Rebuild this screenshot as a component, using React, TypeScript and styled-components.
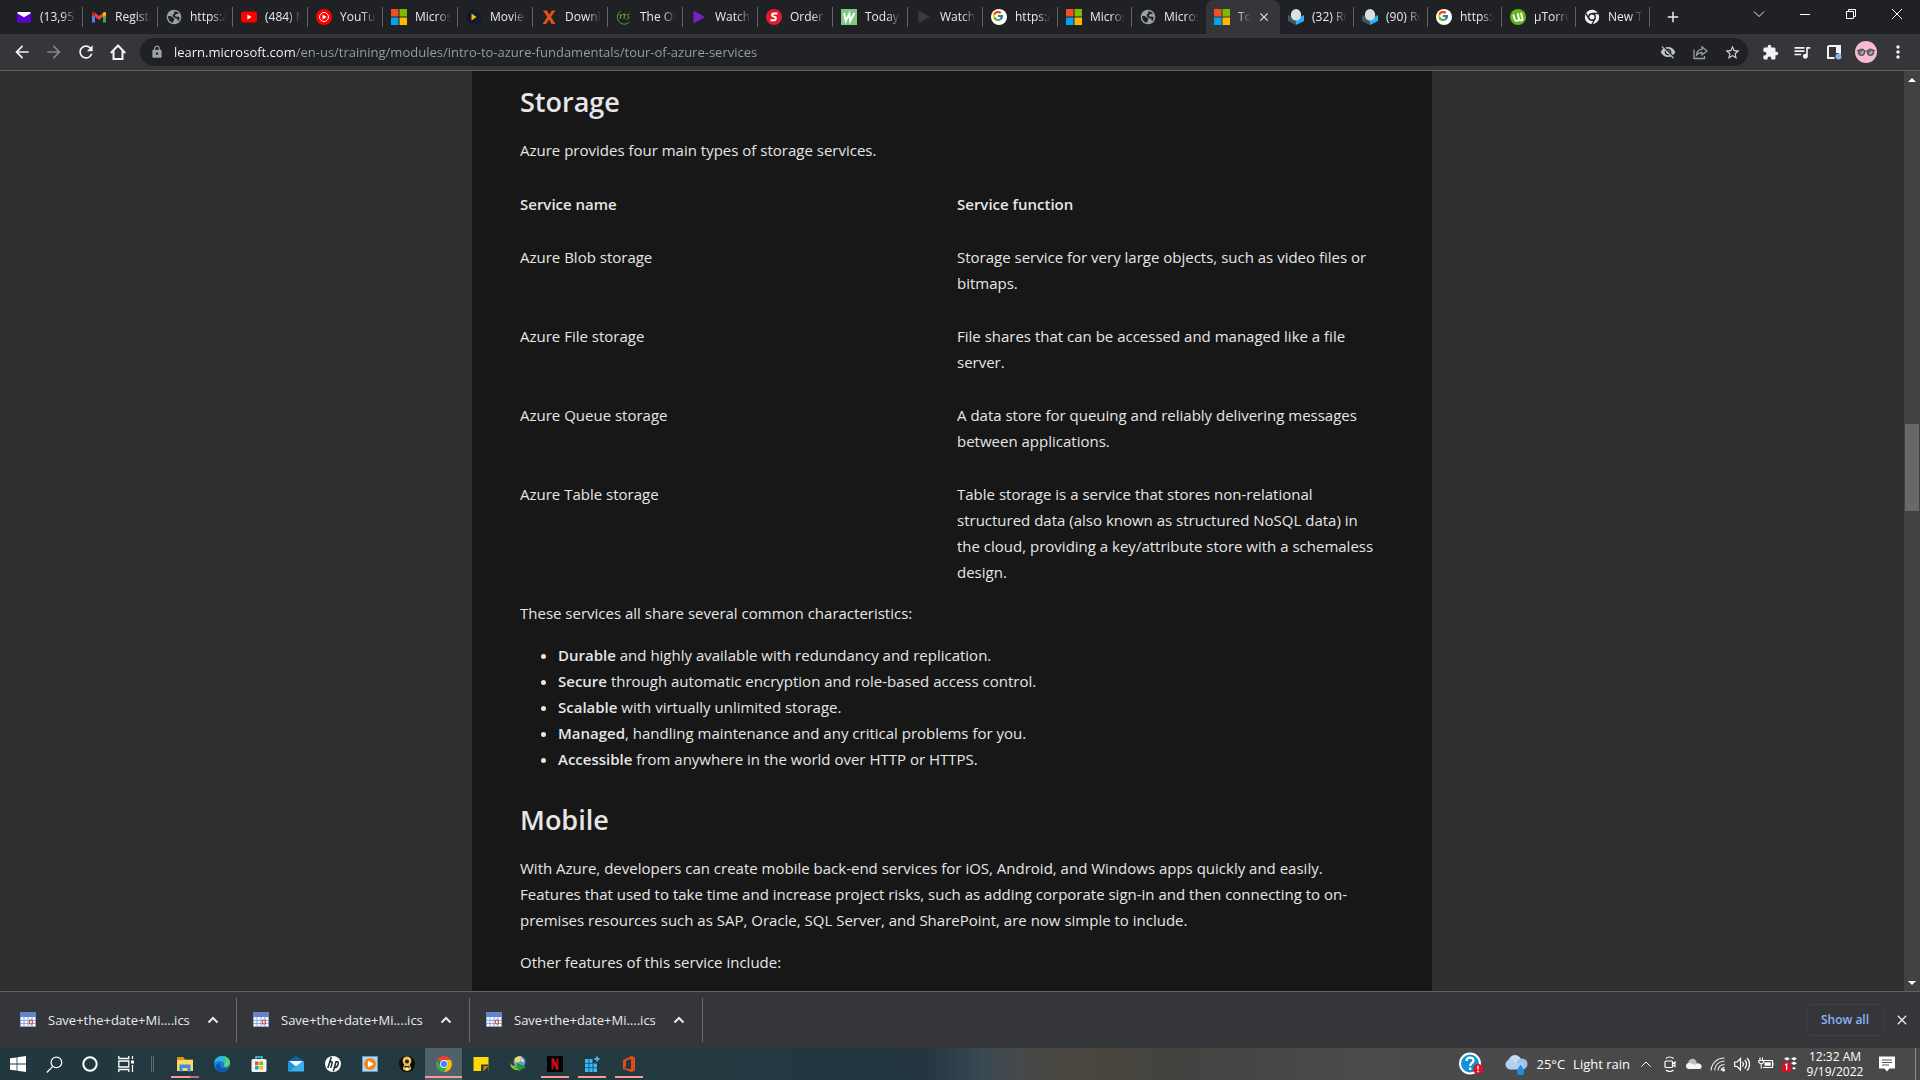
import React from "react";
import styled, { createGlobalStyle, css } from "styled-components";
import {
  MdAdd,
  MdArrowBack,
  MdArrowForward,
  MdClose,
  MdExtension,
  MdLock,
  MdMoreVert,
  MdQueueMusic,
  MdRefresh,
  MdStarBorder,
  MdVisibilityOff,
} from "react-icons/md";
import { FcGoogle } from "react-icons/fc";

const GlobalStyle = createGlobalStyle`
  * { box-sizing: border-box; }
  body { margin: 0; background: #2f2f2f; font-family: "Open Sans", "Noto Sans", sans-serif; }
  button { font: inherit; color: inherit; background: none; border: 0; padding: 0; }
  svg { display: block; flex: none; }
`;

/* ---------- window frame ---------- */

const Window = styled.div`
  display: flex;
  flex-direction: column;
  height: 100vh;
  overflow: hidden;
  color: #e8eaed;
`;

const TabStrip = styled.header`
  display: flex;
  height: 34px;
  flex: none;
  padding-left: 8px;
  background: #202124;
`;

const TabList = styled.nav`
  display: flex;
  min-width: 0;
`;

const Tab = styled.button<{ $active?: boolean }>`
  display: flex;
  align-items: center;
  width: 75px;
  height: 34px;
  padding: 0 0 0 8px;
  font-size: 12px;
  line-height: 16px;
  text-align: left;
  border-radius: 8px 8px 0 0;
  background: ${(p) => (p.$active ? "#35363a" : "transparent")};
  &:nth-child(n + 15) {
    width: 74px;
  }
`;

const TabTitle = styled.span`
  flex: 1;
  min-width: 0;
  margin: 0 6px 0 8px;
  overflow: hidden;
  white-space: nowrap;
  mask-image: linear-gradient(90deg, #000 calc(100% - 14px), transparent);
`;

const TabRule = styled.span<{ $hidden?: boolean }>`
  width: 1px;
  height: 20px;
  background: ${(p) => (p.$hidden ? "transparent" : "#5f6368")};
`;

const TabClose = styled.span`
  margin-right: 8px;
`;

const NewTab = styled.button`
  display: grid;
  place-items: center;
  width: 46px;
  height: 34px;
`;

const Caption = styled.div`
  display: flex;
  margin-left: auto;
`;

const CaptionButton = styled.button`
  display: grid;
  place-items: center;
  width: 46px;
  height: 28px;
`;

const Toolbar = styled.div`
  display: flex;
  align-items: center;
  flex: none;
  height: 37px;
  padding: 0 6px;
  background: #35363a;
  border-bottom: 1px solid #5f6368;
`;

const ToolButton = styled.button<{ $dim?: boolean }>`
  display: grid;
  place-items: center;
  flex: none;
  width: 32px;
  height: 28px;
  color: ${(p) => (p.$dim ? "#85878a" : "#f1f3f4")};
`;

const Omnibox = styled.div`
  display: flex;
  align-items: center;
  flex: 1;
  min-width: 0;
  height: 28px;
  margin: 0 6px;
  padding: 0 0 0 10px;
  border-radius: 14px;
  background: #202124;
  color: #9aa0a6;
`;

const Address = styled.input`
  flex: 1;
  min-width: 0;
  margin-left: 10px;
  padding: 0;
  border: 0;
  outline: 0;
  font: 13px/20px "Open Sans", "Noto Sans", sans-serif;
  color: #9aa0a6;
  background: linear-gradient(90deg, #ffffff 121px, #9aa0a6 121px);
  background-clip: text;
  -webkit-text-fill-color: transparent;
`;

/* ---------- page ---------- */

const Viewport = styled.div`
  display: flex;
  flex: 1;
  min-height: 0;
  background: #2f2f2f;
`;

const Page = styled.main`
  flex: 1;
  min-width: 0;
  overflow: hidden;
`;

const Article = styled.article`
  max-width: 960px;
  min-height: 100%;
  margin: 0 auto;
  padding: 11px 48px 16px;
  background: #171717;
  color: #e6e6e6;
  font-size: 15px;
  line-height: 26px;
`;

const Heading = styled.h2<{ $spaced?: boolean }>`
  margin: ${(p) => (p.$spaced ? "28px" : "0")} 0 15px;
  font-size: 27px;
  line-height: 40px;
  font-weight: 600;
`;

const Paragraph = styled.p`
  margin: 0 0 16px;
`;

const ServiceTable = styled.table`
  width: 100%;
  margin-bottom: 2px;
  table-layout: fixed;
  border-collapse: collapse;
  text-align: left;
`;

const HeadCell = styled.th<{ $wide?: boolean }>`
  padding: 12px 0 13px;
  font-weight: 600;
  width: ${(p) => (p.$wide ? "437px" : "auto")};
`;

const Cell = styled.td`
  padding: 14px 0 13px;
  vertical-align: top;
`;

const Traits = styled.ul`
  margin: 0;
  padding-left: 38px;
  strong {
    font-weight: 600;
  }
`;

const ScrollTrack = styled.div`
  display: grid;
  grid-template-rows: 17px 336fr 87px 463fr 17px;
  justify-items: center;
  width: 16px;
  flex: none;
  background: #424242;
`;

const ScrollThumb = styled.span`
  grid-row: 3;
  width: 14px;
  background: #686868;
`;

const ScrollArrow = styled.button<{ $down?: boolean }>`
  display: grid;
  place-items: center;
  grid-row: ${(p) => (p.$down ? 5 : 1)};
`;

/* ---------- downloads ---------- */

const Downloads = styled.section`
  display: flex;
  align-items: center;
  flex: none;
  height: 57px;
  border-top: 1px solid #5f6368;
  background: #35363a;
  font-size: 12px;
  line-height: 18px;
  padding: 0 10px 0 4px;
`;

const Download = styled.div`
  display: flex;
  align-items: center;
  width: 233px;
  height: 44px;
  padding-left: 16px;
  border-right: 1px solid #6b6c70;
`;

const FileButton = styled.button`
  display: flex;
  align-items: center;
  gap: 12px;
  flex: 1;
  font-size: 13px;
`;

const MenuButton = styled.button`
  display: grid;
  place-items: center;
  width: 46px;
  height: 32px;
`;

const ShowAll = styled.button`
  margin-left: auto;
  width: 78px;
  height: 32px;
  border: 1px solid #3f4045;
  border-radius: 4px;
  color: #8ab4f8;
  font-weight: 600;
`;

const CloseShelf = styled.button`
  margin-left: 10px;
`;

/* ---------- taskbar ---------- */

const Taskbar = styled.footer`
  display: flex;
  flex: none;
  height: 32px;
  color: #fff;
  background: linear-gradient(
    90deg,
    #22383f 0%,
    #233b40 37%,
    #233843 40%,
    #223541 48%,
    #384852 51%,
    #45494a 53%,
    #494740 55%,
    #48453c 58%,
    #434340 61%,
    #444444 64%,
    #4a4a4a 70%,
    #484848 100%
  );
`;

const SystemButton = styled.button`
  display: grid;
  place-items: center;
  width: 36px;
`;

const Grip = styled.span`
  width: 3px;
  height: 16px;
  margin: 8px 12px 8px 7px;
  border: solid #5b6b70;
  border-width: 0 1px;
`;

const AppButton = styled.button<{ $state?: "open" | "stacked" | "active" }>`
  display: grid;
  place-items: center;
  width: 37px;
  height: 32px;
  ${(p) =>
    p.$state === "open" &&
    css`
      background: linear-gradient(#f99a99, #f99a99) center 28px / 28px 2px no-repeat;
    `}
  ${(p) =>
    p.$state === "stacked" &&
    css`
      background: linear-gradient(90deg, #f99a99 19px, #b37478 19px) center 28px / 28px 2px no-repeat;
    `}
  ${(p) =>
    p.$state === "active" &&
    css`
      background: linear-gradient(#f99a99, #f99a99) center 28px / 100% 2px no-repeat, #4f6168;
    `}
`;

const Tray = styled.div`
  display: flex;
  align-items: center;
  margin-left: auto;
`;

const HelpButton = styled.button`
  margin-right: 22px;
`;

const Weather = styled.button`
  display: flex;
  align-items: center;
  gap: 8px;
  margin-right: 4px;
  font-size: 13px;
  line-height: 20px;
  white-space: nowrap;
`;

const TrayButton = styled.button`
  display: grid;
  place-items: center;
  width: 24px;
  height: 32px;
`;

const Clock = styled.button`
  width: 66px;
  font-size: 12px;
  line-height: 15px;
  text-align: center;
`;

const NoticeButton = styled.button`
  display: grid;
  place-items: center;
  width: 38px;
  height: 32px;
`;

const DesktopEdge = styled.button`
  width: 5px;
  height: 32px;
  margin-left: 9px;
  border-left: 1px solid #8a8a8a;
`;

/* ---------- drawings ---------- */

type ArtProps = { size?: number; box?: number; children: React.ReactNode };
const Art = ({ size = 16, box = 16, children }: ArtProps) => (
  <svg width={size} height={size} viewBox={`0 0 ${box} ${box}`} fill="none" aria-hidden="true">
    {children}
  </svg>
);

const MicrosoftMark = () => (
  <Art>
    <path fill="#f25022" d="M0 0h7.500v7.500H0z" />
    <path fill="#7fba00" d="M8.500 0H16v7.500H8.500z" />
    <path fill="#00a4ef" d="M0 8.500h7.500V16H0z" />
    <path fill="#ffb900" d="M8.500 8.500H16V16H8.500z" />
  </Art>
);

const YahooMail = () => (
  <Art>
    <path d="M1 3h14v10.500H1z" fill="#5f01d1" />
    <path d="M2 3h12.500v1.500L8 8.200 1.500 4.500V3z" fill="#fff" />
  </Art>
);

const Gmail = () => (
  <Art>
    <path fill="#4285f4" d="M1 5v8.500h3V6z" />
    <path fill="#34a853" d="M15 5v8.500h-3V6z" />
    <path d="M2.300 4.300L8 9l5.700-4.700" stroke="#ea4335" strokeWidth="3" />
    <path fill="#c5221f" d="M1 6V4.300C1 2.800 2.500 2.500 4 3.700v4.500z" />
    <path fill="#fbbc04" d="M15 6V4.300c0-1.500-1.500-1.800-3-.6v4.500z" />
  </Art>
);

const Globe = () => (
  <Art>
    <circle cx="8" cy="8" r="7.300" fill="#9aa0a6" />
    <path
      fill="#202124"
      d="M2.200 7C4 6.800 5.500 7 6.500 8.300c.5.800 1.700.5 1.900 1.700.1 1-1 1.300-1.100 2.300l-.3 1.500C4.200 13.500 1.700 10.500 2.200 7zM8.300 2.200c2 0 3.700.9 4.700 2.500l-2.600.3-1.700 1.300 1.200 1.400 2.300-.3 1.500 1c-.1 1.500-.7 2.800-1.700 3.800l-.8-2.400-2.300-.9-2.200-1.700.2-1.800 1.300-1.200z"
    />
  </Art>
);

const YouTube = () => (
  <Art>
    <rect y="2.500" width="16" height="11" rx="3" fill="#f00" />
    <path d="M6.400 5.600v4.800L10.600 8z" fill="#fff" />
  </Art>
);

const YouTubeMusic = () => (
  <Art>
    <circle cx="8" cy="8" r="8" fill="#f00" />
    <circle cx="8" cy="8" r="4.500" stroke="#fff" />
    <path d="M6.500 5.500v5L10.700 8z" fill="#fff" />
  </Art>
);

const MoviesMark = () => (
  <Art>
    <circle cx="8" cy="8" r="7.500" fill="#111c2b" />
    <path d="M5.500 4.500v7L10.500 8z" fill="#fdb913" />
  </Art>
);

const XMark = () => (
  <Art>
    <path d="M2 1.500h4l2.200 4L11 1.500h3.500L10 8l4.500 7h-4L8 10.500 5.200 15H1.700L6.200 8z" fill="#e2501d" />
  </Art>
);

const YtsMark = () => (
  <Art>
    <path d="M4.500 2.200C.5 4.800.3 10.500 4 13.700c3 2.300 7.500 1.700 9.500-.8" stroke="#4ea72c" />
    <path d="M3.500 5l1.200 2L6.500 5M4.700 7l-.5 3M7 5.300h3M8.500 5.300L8 10M13.500 5.300c-2.500-.3-2.800 1.500-1.200 2.200 1.500.8.700 2.600-1.800 2.300" stroke="#5fb33a" />
  </Art>
);

const PlayMark = ({ color }: { color: string }) => (
  <Art>
    <path d="M2.500 1.500v13L14 8z" fill={color} />
  </Art>
);

const OrderMark = () => (
  <Art>
    <circle cx="8" cy="8" r="8" fill="#e21b2c" />
    <path d="M11.500 4.500H7.700C5.800 4.500 5.500 7 7 7.400l2 .6c1.400.5 1 3.300-.9 3.300H4.500" stroke="#fff" strokeWidth="2" />
  </Art>
);

const WMark = () => (
  <Art>
    <path fill="#82c785" d="M0 0h16v16H0z" />
    <path d="M3 4l1.700 8L8.300 5l.9 7L13.500 4" stroke="#fff" strokeWidth="2" />
  </Art>
);

const GoogleMark = () => (
  <Art>
    <circle cx="8" cy="8" r="8" fill="#fff" />
    <FcGoogle x="1" y="1" width="14" height="14" />
  </Art>
);

const CubeMark = () => (
  <Art>
    <path fill="#3b5a66" d="M0 6l8 4v6l-8-4z" />
    <path fill="#27b5f5" d="M16 6v6l-8 4v-6z" />
    <ellipse cx="8" cy="5.800" rx="5.200" ry="5.800" fill="#dcdfe2" />
  </Art>
);

const TorrentMark = () => (
  <Art>
    <circle cx="8" cy="8" r="8" fill="#62b51a" />
    <path d="M3.300 5.500l1.500 5.200c.5 1.500 3.800 1.300 4.200-.3L7.700 4.300M9 10.200c.8 1.700 2.800 1.500 3.600.3L11 3.800" stroke="#fff" strokeWidth="1.900" />
  </Art>
);

const ChromeMono = () => (
  <Art>
    <circle cx="8" cy="8" r="7.200" fill="#f1f3f4" />
    <circle cx="8" cy="8" r="3.200" fill="#f1f3f4" stroke="#202124" strokeWidth="1.400" />
    <path d="M8 4.500h6.500M5 9.800L1.800 4.300M11 9.800l-3 5.500" stroke="#202124" strokeWidth="1.300" />
  </Art>
);

const HomeIcon = () => (
  <Art>
    <path d="M3.500 7v8h9V7M.8 9L8 1.500 15.200 9" stroke="currentColor" strokeWidth="2" />
  </Art>
);

const ShareIcon = () => (
  <Art>
    <path d="M2 5.500v9h10.500V12" stroke="#9aa0a6" strokeWidth="1.300" />
    <path d="M4.500 11c.3-3.500 2.200-5.500 5.500-5.600V2.800L15 7l-5 4V8.500c-2.300 0-4 .6-5.500 2.500z" stroke="#9aa0a6" strokeWidth="1.300" />
  </Art>
);

const SidePanel = () => (
  <Art>
    <path d="M2 2h12v8M8.500 14H2V2" stroke="#f1f3f4" strokeWidth="2" />
    <path d="M10 2h4v7h-4z" fill="#f1f3f4" />
    <circle cx="12.500" cy="12.500" r="3" fill="#8ab4f8" />
  </Art>
);

const Avatar = () => (
  <Art size={22} box={22}>
    <circle cx="11" cy="11" r="11" fill="#f8bbd0" />
    <circle cx="6.500" cy="11.300" r="3.300" fill="#6d7478" stroke="#4b4b50" />
    <circle cx="15.500" cy="11.300" r="3.300" fill="#6d7478" stroke="#4b4b50" />
    <path d="M2 9.500h2M18 9.500h2M9.500 10.500c1-.8 2-.8 3 0" stroke="#4a4146" />
    <path d="M6 13l2.500-2.500M15 13l2.500-2.500" stroke="#b9c2c6" strokeWidth="1.500" />
  </Art>
);

const Chevron = ({ down, size = 14, weight = 2 }: { down?: boolean; size?: number; weight?: number }) => (
  <Art size={size} box={14}>
    <path d={down ? "M2 4.500l5 5 5-5" : "M2.500 9.500L7 5l4.500 4.500"} stroke="currentColor" strokeWidth={weight} />
  </Art>
);

const CalendarFile = () => (
  <Art>
    <path fill="#f4f7ff" d="M0 1h16v14H0z" />
    <path fill="#5b83d8" d="M0 1h16v4H0z" />
    <path d="M.5.500h15" stroke="#c9d4ee" strokeDasharray="1 1" />
    <path d="M0 8.500h16M0 11.500h16M.5 5v10M4 5v10M8 5v10M12 5v10M15.500 5v10M0 14.500h16" stroke="#7c98d2" strokeWidth=".8" />
    <path d="M9.500 8h3v4h-3z" stroke="#e2522b" />
  </Art>
);

const WindowsMark = () => (
  <Art>
    <path fill="#fff" d="M0 2.300l6.600-.9v6.200H0zM7.400 1.300L16 0v7.600H7.400zM0 8.400h6.600v6.200L0 13.700zM7.400 8.400H16V16l-8.600-1.200z" />
  </Art>
);

const SearchMark = () => (
  <Art size={17}>
    <circle cx="9.800" cy="6" r="5" stroke="#fff" strokeWidth="1.200" />
    <path d="M6.300 9.800L.8 15.500" stroke="#fff" strokeWidth="1.200" />
  </Art>
);

const CortanaMark = () => (
  <Art>
    <circle cx="8" cy="8" r="6.700" stroke="#fff" strokeWidth="2" />
  </Art>
);

const TaskViewMark = () => (
  <Art>
    <path d="M.8 0v2.500h10V0M.8 16v-2.500h10V16M.8 5h10v6h-10zM14.500 0v3M14.500 9v7" stroke="#fff" strokeWidth="1.300" />
    <path d="M13 4.500h3v3h-3z" fill="#fff" />
  </Art>
);

const FolderMark = () => (
  <Art>
    <path fill="#d9960a" d="M0 1h6.500L8 3.500h8V9H0z" />
    <path fill="#ffd768" d="M0 4h16v11H0z" />
    <path fill="#3b8ee0" d="M2.500 8.500h11V15.500h-3V12h-5v3.500h-3z" />
  </Art>
);

const EdgeMark = () => (
  <Art>
    <circle cx="8" cy="8" r="8" fill="#1583d8" />
    <path fill="#2fb9d8" d="M.2 6.500C1 2.500 4.300 0 8.200 0 13 0 16 3.500 16 6.800c0 2.300-1.800 3.900-4 3.900-1.800 0-2.700-.8-1.900-1.800.6-2.200-1.600-4-4.300-4-2.500 0-4.500.8-5.600 1.600z" />
    <path fill="#5fd45f" d="M10 .2C14 1 16 4 16 6.800c0 2.300-1.800 3.900-4 3.900-1.300 0-2-.5-2.100-1C12 7.500 12.500 3.500 10 .2z" />
    <path fill="#0f55ae" d="M5.800 6.500C4.300 10.500 8 14.300 13.500 12.800c-2.500 4-8.500 4-11 .5C1 10.500 2.800 7.300 5.800 6.500z" />
    <path fill="#22383f" d="M7.200 7.200c-1.200 2.300.8 5 4 5 1.600 0 3-.4 3.800-1v1c-3 1.300-6.800.6-8-1.700-.6-1.200-.6-2.500.2-3.300z" />
  </Art>
);

const StoreMark = () => (
  <Art>
    <path d="M5 4V1h6v3" stroke="#4cc2f1" strokeWidth="1.500" />
    <rect x=".5" y="3" width="15" height="13" rx="1.500" fill="#f3f3f3" />
    <path fill="#f25022" d="M4 5.500h3.600v3.600H4z" />
    <path fill="#7fba00" d="M8.400 5.500H12v3.600H8.400z" />
    <path fill="#00a4ef" d="M4 9.900h3.600v3.600H4z" />
    <path fill="#ffb900" d="M8.400 9.900H12v3.600H8.400z" />
  </Art>
);

const MailMark = () => (
  <Art>
    <path fill="#1261a8" d="M0 5l8-5 8 5v4H0z" />
    <path fill="#f3f8fc" d="M1 5h14l-7 6z" />
    <path fill="#1f93dd" d="M0 5l8 5.500L0 15.500z" />
    <path fill="#36b2f2" d="M16 5v10.500H0z" />
  </Art>
);

const HpMark = () => (
  <Art>
    <circle cx="8" cy="8" r="8" fill="#fff" />
    <path d="M6.300 1L2.800 12M4.700 6.200c2.300-.9 2.900-.3 2.300 1.400l-1.300 4.300M8.300 15.300L11 5.800h1.500c1.300 0 .9 1.600.4 3-.5 1.700-1 2.800-3 2.800" stroke="#1c2b33" strokeWidth="1.500" />
  </Art>
);

const PlayerMark = () => (
  <Art>
    <rect x=".5" y=".5" width="15" height="15" fill="#b5d9f3" stroke="#5d9bcb" />
    <circle cx="8" cy="8" r="6" fill="#f5871a" />
    <path d="M6 4.500v7L11.700 8z" fill="#fff" />
  </Art>
);

const GoldMark = () => (
  <Art>
    <circle cx="8" cy="8" r="8" fill="#0c0c0c" />
    <path fill="#e9c355" d="M3.800 3.500c.7-4 7.700-4 8.400 0 .6 2.500-.7 4-1.500 5.300l1.500 3.700c-1.300 3.300-7 3.300-8.400 0l1.500-3.700C4.500 7.500 3.200 6 3.800 3.500z" />
    <circle cx="8" cy="5.500" r="2" fill="#2a1a08" />
    <path fill="#2a1a08" d="M5.500 10h5v1.500h-5z" />
    <circle cx="8" cy="12.800" r="1.300" fill="#fff5c8" />
  </Art>
);

const ChromeMark = () => (
  <Art>
    <path fill="#ea4335" d="M1.100 4A8 8 0 0 1 14.900 4H8a4 4 0 0 0-3.500 2z" />
    <path fill="#34a853" d="M1.100 4L4.600 10A4 4 0 0 0 8 12l3.400-2-3.400 6A8 8 0 0 1 1.100 4z" />
    <path fill="#fbbc05" d="M14.900 4A8 8 0 0 1 8 16l3.500-6A4 4 0 0 0 11.500 6L8 4z" />
    <circle cx="8" cy="8" r="3.900" fill="#fff" />
    <circle cx="8" cy="8" r="3.100" fill="#4285f4" />
  </Art>
);

const NotesMark = () => (
  <Art>
    <path fill="#ffd900" d="M.5 1h15v14H.5z" />
    <path fill="#3c3c3c" d="M8 15V8.500h7.500V10L10.500 15z" />
    <path fill="#22383f" d="M15.500 10v5h-5z" />
    <path fill="#b98d00" d="M10.500 15v-5h5z" />
  </Art>
);

const IdmMark = () => (
  <Art>
    <circle cx="9.500" cy="6" r="6" fill="#6f93d6" />
    <path fill="#e8dc6a" d="M4.500 3c2-3 6-3.500 7.500-2L9.500 6 5.500 7z" />
    <path fill="#d9e6fa" d="M11 2.500c2 .3 3 2 3 3.500l-3-.5z" />
    <path fill="#8fc42e" d="M.5 7C1 9 3 10 6 10l1-2.500 1 3V14C3.500 14.500-.5 11 .5 7z" />
    <path fill="#1f9c2f" d="M6.500 6.500L16 11l-8 4.500v-2.700L4 11.500l3-1z" />
  </Art>
);

const NetflixMark = () => (
  <Art>
    <path fill="#000" d="M0 0h16v16H0z" />
    <path fill="#b1060f" d="M4.500 2.500h2.200v11H4.500zM9.300 2.500h2.200v11H9.300z" />
    <path fill="#e50914" d="M4.500 2.500h2.300l4.700 11H9.200z" />
  </Art>
);

const RegistryMark = () => (
  <Art>
    <path fill="#3fb9ee" d="M1 3h7.500v4.500H13V16H1z" />
    <path d="M1 7.300h8M1 11.700h12M5 3v13M9 7v9" stroke="#0f5f8f" />
    <path d="M13 .5v5M10.500 3h5" stroke="#45b8ee" strokeWidth="1.800" />
  </Art>
);

const OfficeMark = () => (
  <Art>
    <path fill="#e64a19" fillRule="evenodd" d="M2 4l8.500-4L14 1.200v13.600L10.500 16 2 13V4zm3 .8V11l-2 1 7 1.300V3z" />
  </Art>
);

const HelpMark = () => (
  <Art size={24} box={24}>
    <circle cx="11" cy="11.500" r="10" fill="#0a96d6" stroke="#fff" strokeWidth="2" />
    <path d="M7.500 9c0-4.500 7-4.500 7-.5 0 2.500-3.300 2.500-3.300 5.500M11.200 15.500V18" stroke="#fff" strokeWidth="2.300" />
    <circle cx="19" cy="17" r="5" fill="#e81123" />
    <path d="M19 13.800v3.700M19 18.700v1.500" stroke="#fff" strokeWidth="1.500" />
  </Art>
);

const RainMark = () => (
  <Art size={23} box={23}>
    <circle cx="10" cy="8.500" r="6.500" fill="#c6dcf7" />
    <circle cx="5.500" cy="11.500" r="5" fill="#b5d0f3" />
    <circle cx="17" cy="11" r="5.500" fill="#a2bfe8" />
    <path fill="#b5cff2" d="M5 10h13v6.500H5z" />
    <path fill="#1a8fe0" d="M15.500 11.500c2.500 3.500 3.700 5.300 3.700 7.200a3.600 3.600 0 0 1-7.200 0c0-2 1.500-4 3.500-7.200z" />
  </Art>
);

const MeetMark = () => (
  <Art>
    <rect x="3" y="5" width="7.500" height="6.500" rx="1" stroke="#fff" strokeWidth="1.200" />
    <path d="M10.500 7.500L13 6v4.500L10.500 9M4 2.500C6 .5 9.500.5 11.500 2.500M4 14c2 2 5.500 2 7.500 0" stroke="#fff" strokeWidth="1.200" />
  </Art>
);

const CloudMark = () => (
  <Art>
    <circle cx="6.500" cy="7" r="4.200" fill="#bdbdbd" />
    <path fill="#f4f4f4" d="M3 13a3 3 0 0 1 0-6c3 0 4 1 6 2 1-1.500 2.500-2 4-1.500C16.500 8.500 16.500 13 13.500 13z" />
  </Art>
);

const WifiMark = () => (
  <Art>
    <path d="M1 14.500C1.500 7.500 7 2 14.500 2M4.500 14.500c.5-5 4-9 10-9.500M8 14.500c.3-3 2.500-5.700 6.500-6M11 14.500c.3-1.800 1.500-3 3.500-3.300" stroke="#f1f1f1" strokeWidth="1.100" />
    <circle cx="13.500" cy="14" r="1.500" fill="#fff" />
  </Art>
);

const SpeakerMark = () => (
  <Art>
    <path d="M.7 6v4.500h2.500L6.500 14V2.500L3.200 6zM8.500 6c1.200 1 1.200 3.500 0 4.500M10.700 4c2.300 2 2.300 6.500 0 8.500M13 2c3.300 3 3.300 9.500 0 12.500" stroke="#fff" strokeWidth="1.200" />
  </Art>
);

const BatteryMark = () => (
  <Art>
    <path d="M4.500 4.500h10v7H5M16 6.500v3M2 1.500v3M4.500 1.500v3M.8 4.500h4.900v2L3.200 8 .8 6.500zM3.200 8v4.500" stroke="#fff" strokeWidth="1.100" />
    <path fill="#fff" d="M6.500 6.300h6.300v3.500H6.500z" />
  </Art>
);

const DropboxMark = () => (
  <Art>
    <path fill="#fff" d="M5 1l3 1.700L5 4.500 2 2.700zM12 1l3 1.700-3 1.800-3-1.800zM12 5.500l3 1.700L12 9 9 7.200zM12 11l2 1.200-2 1.300-2-1.300z" />
    <path fill="#d4122a" d="M0 6.500h9V16H0z" />
    <path d="M3.200 9l1.500-.9v6" stroke="#fff" strokeWidth="1.200" />
  </Art>
);

const NoticeMark = () => (
  <Art>
    <path fill="#fff" d="M0 .5h16v12h-5.500L8 15.500l-2.500-3H0z" />
    <path d="M3 4h10M3 6.500h10M3 9h7" stroke="#555" />
  </Art>
);

/* ---------- content ---------- */

const tabs: { title: string; icon: React.ReactNode; active?: boolean }[] = [
  { title: "(13,958", icon: <YahooMail /> },
  { title: "Registra", icon: <Gmail /> },
  { title: "https://", icon: <Globe /> },
  { title: "(484) M", icon: <YouTube /> },
  { title: "YouTub", icon: <YouTubeMusic /> },
  { title: "Microso", icon: <MicrosoftMark /> },
  { title: "Movies", icon: <MoviesMark /> },
  { title: "Downl", icon: <XMark /> },
  { title: "The Of", icon: <YtsMark /> },
  { title: "Watch", icon: <PlayMark color="#7d1fc1" /> },
  { title: "Order", icon: <OrderMark /> },
  { title: "Today's", icon: <WMark /> },
  { title: "Watch", icon: <PlayMark color="#3c3c3c" /> },
  { title: "https://", icon: <GoogleMark /> },
  { title: "Microso", icon: <MicrosoftMark /> },
  { title: "Microso", icon: <Globe /> },
  { title: "Tou", icon: <MicrosoftMark />, active: true },
  { title: "(32) Ro", icon: <CubeMark /> },
  { title: "(90) Ro", icon: <CubeMark /> },
  { title: "https://", icon: <GoogleMark /> },
  { title: "µTorre", icon: <TorrentMark /> },
  { title: "New Ta", icon: <ChromeMono /> },
];

const services = [
  ["Azure Blob storage", "Storage service for very large objects, such as video files or bitmaps."],
  ["Azure File storage", "File shares that can be accessed and managed like a file server."],
  ["Azure Queue storage", "A data store for queuing and reliably delivering messages between applications."],
  [
    "Azure Table storage",
    "Table storage is a service that stores non-relational structured data (also known as structured NoSQL data) in the cloud, providing a key/attribute store with a schemaless design.",
  ],
];

const traits = [
  ["Durable", " and highly available with redundancy and replication."],
  ["Secure", " through automatic encryption and role-based access control."],
  ["Scalable", " with virtually unlimited storage."],
  ["Managed", ", handling maintenance and any critical problems for you."],
  ["Accessible", " from anywhere in the world over HTTP or HTTPS."],
];

const apps: { name: string; icon: React.ReactNode; state?: "open" | "stacked" | "active" }[] = [
  { name: "File Explorer", icon: <FolderMark />, state: "stacked" },
  { name: "Edge", icon: <EdgeMark /> },
  { name: "Store", icon: <StoreMark /> },
  { name: "Mail", icon: <MailMark /> },
  { name: "HP", icon: <HpMark /> },
  { name: "Media Player", icon: <PlayerMark /> },
  { name: "Audio", icon: <GoldMark /> },
  { name: "Chrome", icon: <ChromeMark />, state: "active" },
  { name: "Sticky Notes", icon: <NotesMark /> },
  { name: "Download Manager", icon: <IdmMark /> },
  { name: "Netflix", icon: <NetflixMark />, state: "open" },
  { name: "Registry", icon: <RegistryMark />, state: "open" },
  { name: "Office", icon: <OfficeMark />, state: "open" },
];

export default function App() {
  return (
    <Window>
      <GlobalStyle />
      <TabStrip>
        <TabList aria-label="Tabs">
          {tabs.map((tab, i) => (
            <Tab key={i} $active={tab.active}>
              {tab.icon}
              <TabTitle>{tab.title}</TabTitle>
              {tab.active && (
                <TabClose>
                  <MdClose size={14} />
                </TabClose>
              )}
              <TabRule $hidden={tab.active || tabs[i + 1]?.active} />
            </Tab>
          ))}
        </TabList>
        <NewTab aria-label="New tab">
          <MdAdd size={18} />
        </NewTab>
        <Caption>
          <CaptionButton aria-label="Search tabs">
            <Chevron down weight={1} />
          </CaptionButton>
          <CaptionButton aria-label="Minimize">
            <Art size={10} box={10}>
              <path d="M0 5.500h10" stroke="#fff" />
            </Art>
          </CaptionButton>
          <CaptionButton aria-label="Restore">
            <Art size={10} box={10}>
              <path d="M.5 2.500h7v7h-7zM2.500 2.500v-2h7v7h-2" stroke="#fff" />
            </Art>
          </CaptionButton>
          <CaptionButton aria-label="Close window">
            <Art size={10} box={10}>
              <path d="M0 0l10 10M10 0L0 10" stroke="#fff" />
            </Art>
          </CaptionButton>
        </Caption>
      </TabStrip>

      <Toolbar>
        <ToolButton aria-label="Back">
          <MdArrowBack size={20} />
        </ToolButton>
        <ToolButton aria-label="Forward" $dim>
          <MdArrowForward size={20} />
        </ToolButton>
        <ToolButton aria-label="Reload">
          <MdRefresh size={20} />
        </ToolButton>
        <ToolButton aria-label="Home">
          <HomeIcon />
        </ToolButton>
        <Omnibox>
          <MdLock size={14} />
          <Address
            aria-label="Address"
            defaultValue="learn.microsoft.com/en-us/training/modules/intro-to-azure-fundamentals/tour-of-azure-services"
          />
          <ToolButton aria-label="Third-party cookies blocked">
            <MdVisibilityOff size={16} color="#bdc1c6" />
          </ToolButton>
          <ToolButton aria-label="Share">
            <ShareIcon />
          </ToolButton>
          <ToolButton aria-label="Bookmark">
            <MdStarBorder size={17} color="#d5d7da" />
          </ToolButton>
        </Omnibox>
        <ToolButton aria-label="Extensions">
          <MdExtension size={17} />
        </ToolButton>
        <ToolButton aria-label="Media control">
          <MdQueueMusic size={20} />
        </ToolButton>
        <ToolButton aria-label="Side panel">
          <SidePanel />
        </ToolButton>
        <ToolButton aria-label="Profile">
          <Avatar />
        </ToolButton>
        <ToolButton aria-label="Menu">
          <MdMoreVert size={20} />
        </ToolButton>
      </Toolbar>

      <Viewport>
        <Page>
          <Article>
            <Heading>Storage</Heading>
            <Paragraph>Azure provides four main types of storage services.</Paragraph>
            <ServiceTable>
              <thead>
                <tr>
                  <HeadCell $wide>Service name</HeadCell>
                  <HeadCell>Service function</HeadCell>
                </tr>
              </thead>
              <tbody>
                {services.map(([name, text]) => (
                  <tr key={name}>
                    <Cell>{name}</Cell>
                    <Cell>{text}</Cell>
                  </tr>
                ))}
              </tbody>
            </ServiceTable>
            <Paragraph>These services all share several common characteristics:</Paragraph>
            <Traits>
              {traits.map(([name, text]) => (
                <li key={name}>
                  <strong>{name}</strong>
                  {text}
                </li>
              ))}
            </Traits>
            <Heading $spaced>Mobile</Heading>
            <Paragraph>
              With Azure, developers can create mobile back-end services for iOS, Android, and Windows apps quickly
              and easily. Features that used to take time and increase project risks, such as adding corporate sign-in
              and then connecting to on-premises resources such as SAP, Oracle, SQL Server, and SharePoint, are now
              simple to include.
            </Paragraph>
            <Paragraph>Other features of this service include:</Paragraph>
          </Article>
        </Page>
        <ScrollTrack>
          <ScrollArrow aria-label="Scroll up">
            <Art size={8} box={8}>
              <path d="M0 6l4-4 4 4z" fill="#fff" />
            </Art>
          </ScrollArrow>
          <ScrollThumb />
          <ScrollArrow $down aria-label="Scroll down">
            <Art size={8} box={8}>
              <path d="M0 2l4 4 4-4z" fill="#fff" />
            </Art>
          </ScrollArrow>
        </ScrollTrack>
      </Viewport>

      <Downloads aria-label="Downloads">
        {[1, 2, 3].map((n) => (
          <Download key={n}>
            <FileButton>
              <CalendarFile />
              Save+the+date+Mi....ics
            </FileButton>
            <MenuButton aria-label="Download options">
              <Chevron />
            </MenuButton>
          </Download>
        ))}
        <ShowAll>Show all</ShowAll>
        <CloseShelf aria-label="Close downloads">
          <MdClose size={16} />
        </CloseShelf>
      </Downloads>

      <Taskbar>
        <SystemButton aria-label="Start">
          <WindowsMark />
        </SystemButton>
        <SystemButton aria-label="Search">
          <SearchMark />
        </SystemButton>
        <SystemButton aria-label="Cortana">
          <CortanaMark />
        </SystemButton>
        <SystemButton aria-label="Task view">
          <TaskViewMark />
        </SystemButton>
        <Grip />
        {apps.map((app) => (
          <AppButton key={app.name} aria-label={app.name} $state={app.state}>
            {app.icon}
          </AppButton>
        ))}
        <Tray>
          <HelpButton aria-label="Help">
            <HelpMark />
          </HelpButton>
          <Weather>
            <RainMark />
            <span>25°C</span>
            <span>Light rain</span>
          </Weather>
          <TrayButton aria-label="Hidden icons">
            <Chevron weight={1} />
          </TrayButton>
          <TrayButton aria-label="Meet now">
            <MeetMark />
          </TrayButton>
          <TrayButton aria-label="OneDrive">
            <CloudMark />
          </TrayButton>
          <TrayButton aria-label="Network">
            <WifiMark />
          </TrayButton>
          <TrayButton aria-label="Volume">
            <SpeakerMark />
          </TrayButton>
          <TrayButton aria-label="Battery">
            <BatteryMark />
          </TrayButton>
          <TrayButton aria-label="Dropbox">
            <DropboxMark />
          </TrayButton>
          <Clock>
            12:32 AM
            <br />
            9/19/2022
          </Clock>
          <NoticeButton aria-label="Notifications">
            <NoticeMark />
          </NoticeButton>
          <DesktopEdge aria-label="Show desktop" />
        </Tray>
      </Taskbar>
    </Window>
  );
}
